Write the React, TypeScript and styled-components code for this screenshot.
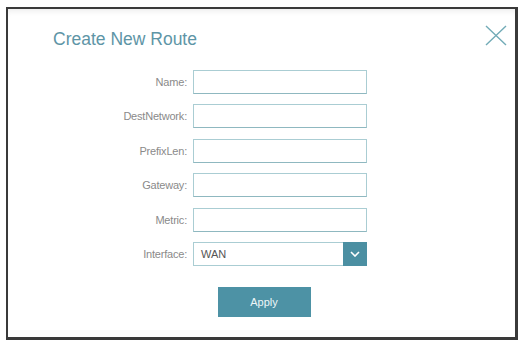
import { Fragment } from 'react';
import styled, { createGlobalStyle } from 'styled-components';

const GlobalStyle = createGlobalStyle`
  html, body {
    margin: 0;
    padding: 0;
    background: #ffffff;
  }
  body {
    font-family: "Liberation Sans", Arial, sans-serif;
  }
`;

const Page = styled.div`
  width: 518px;
  height: 340px;
  padding: 7px 0 0 6px;
  box-sizing: border-box;
  background: #ffffff;
`;

const Frame = styled.div`
  width: 512px;
  height: 333px;
  box-sizing: border-box;
  border-style: solid;
  border-color: #3a3a3a;
  border-width: 2px 3px 3px 2px;
  background: #ffffff;
  box-shadow: inset 0 6px 6px -4px rgba(0, 0, 0, 0.08);
  display: flex;
  flex-direction: column;
`;

const Header = styled.div`
  display: flex;
  justify-content: space-between;
  align-items: flex-start;
  padding: 16px 8px 0 45px;
`;

const Title = styled.h1`
  margin: 4px 0 0;
  font-size: 17.5px;
  font-weight: normal;
  line-height: 21px;
  color: #5e95a6;
`;

const CloseButton = styled.button`
  all: unset;
  width: 22px;
  height: 21px;
  cursor: pointer;
  display: flex;
`;

const Form = styled.div`
  display: grid;
  grid-template-columns: 130px 174px;
  column-gap: 6px;
  row-gap: 10.4px;
  margin: 20px 0 0 49px;
`;

const Label = styled.label`
  font-size: 11px;
  line-height: 24px;
  color: #8a8a8a;
  text-align: right;
  letter-spacing: -0.2px;
`;

const TextInput = styled.div`
  height: 24px;
  box-sizing: border-box;
  border: 1px solid #aacdd3;
  border-bottom-color: #8fb8c0;
  background: #ffffff;
`;

const Select = styled.div`
  height: 24px;
  box-sizing: border-box;
  display: flex;
  border: 1px solid #aacdd3;
  border-right: none;
  background: #ffffff;
`;

const SelectValue = styled.span`
  flex: 1;
  padding-left: 7px;
  font-size: 11px;
  line-height: 22px;
  color: #555555;
`;

const SelectArrow = styled.span`
  width: 24px;
  margin: -1px 0;
  background: #4b8fa2;
  display: flex;
  align-items: center;
  justify-content: center;
`;

const Actions = styled.div`
  display: flex;
  justify-content: center;
  margin: 21px 0 0 5px;
`;

const ApplyButton = styled.button`
  all: unset;
  width: 93px;
  height: 30px;
  background: #4d92a5;
  color: #eef6f8;
  font-size: 11px;
  text-align: center;
  line-height: 30px;
  cursor: pointer;
`;

const fields = ['Name:', 'DestNetwork:', 'PrefixLen:', 'Gateway:', 'Metric:'];

const App = () => {
  return (
    <>
      <GlobalStyle />
      <Page>
        <Frame>
          <Header>
            <Title>Create New Route</Title>
            <CloseButton aria-label="close">
              <svg width="22" height="21" viewBox="0 0 22 21">
                <path d="M1 1 L21 20 M21 1 L1 20" stroke="#72abb7" strokeWidth="1.4" fill="none" />
              </svg>
            </CloseButton>
          </Header>
          <Form>
            {fields.map((f) => (
              <Fragment key={f}>
                <Label>{f}</Label>
                <TextInput />
              </Fragment>
            ))}
            <Label>Interface:</Label>
            <Select>
              <SelectValue>WAN</SelectValue>
              <SelectArrow>
                <svg width="10" height="6" viewBox="0 0 10 6">
                  <path d="M1 1 L5 5 L9 1" stroke="#ffffff" strokeWidth="1.6" fill="none" />
                </svg>
              </SelectArrow>
            </Select>
          </Form>
          <Actions>
            <ApplyButton>Apply</ApplyButton>
          </Actions>
        </Frame>
      </Page>
    </>
  );
};

export default App;
